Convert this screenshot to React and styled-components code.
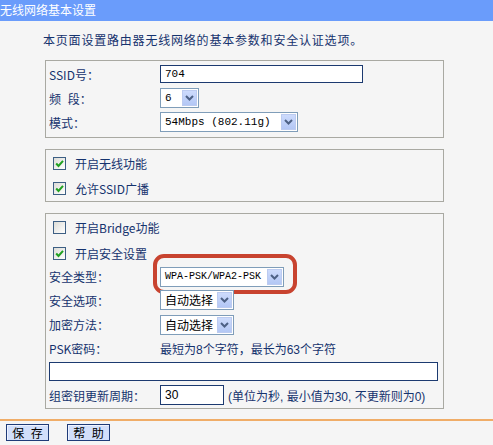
import React from "react";
import styled, { createGlobalStyle } from "styled-components";

const GlobalStyle = createGlobalStyle`
  html, body {
    margin: 0;
    padding: 0;
    background: #f5f5f5;
  }
  body {
    font-family: "Noto Sans CJK SC", "Liberation Sans", sans-serif;
    font-size: 12px;
    color: #15336e;
  }
`;

const Page = styled.div`
  width: 493px;
  height: 445px;
  overflow: hidden;
  background: #f5f5f5;
`;

const TitleBar = styled.div`
  height: 21px;
  background: #6a9cfb;
  color: #fff;
  font-size: 12px;
  line-height: 19px;
  white-space: nowrap;
`;

const Content = styled.div`
  padding-left: 43px;
  width: 401px;
`;

const Intro = styled.div`
  margin-top: 10px;
  height: 18px;
  line-height: 18px;
  letter-spacing: 0.8px;
  white-space: nowrap;
`;

const Box = styled.div`
  margin: 11px 0 0 2px;
  width: 397px;
  border: 1px solid #a9a9a2;
  padding: ${(p) => p.pad || "0"};
`;

const Row = styled.div`
  position: relative;
  display: flex;
  align-items: center;
  height: ${(p) => p.h || 24}px;
  padding-left: 3px;
  white-space: nowrap;
`;

const Label = styled.div`
  width: 111px;
  flex: none;
  word-spacing: 4px;
`;

const TextInput = styled.div`
  box-sizing: border-box;
  width: ${(p) => p.w}px;
  height: ${(p) => p.h || 18}px;
  border: 1px solid #1c3a70;
  background: #fff;
  color: #000;
  font-family: ${(p) => (p.sans ? '"Liberation Sans", sans-serif' : '"Liberation Mono", monospace')};
  font-size: ${(p) => (p.sans ? 12 : 11)}px;
  line-height: ${(p) => (p.h || 18) - 2}px;
  padding-left: 4px;
`;

const Select = styled.div`
  box-sizing: border-box;
  width: ${(p) => p.w}px;
  height: 20px;
  border: 1px solid #7f9db9;
  background: #fff;
  display: flex;
  align-items: center;
  justify-content: space-between;
  padding: 1px 1px 1px 4px;
  color: #000;
`;

const SelectText = styled.span`
  font-family: ${(p) => (p.mono ? '"Liberation Mono", monospace' : '"Noto Sans CJK SC", sans-serif')};
  font-size: ${(p) => p.size || 12}px;
  line-height: 16px;
`;

const Arrow = styled.span`
  box-sizing: border-box;
  width: 15px;
  height: 16px;
  border: 1px solid #bccbf0;
  background: linear-gradient(#cddbfc, #b3c7f5);
  display: flex;
  align-items: center;
  justify-content: center;
`;

const CheckRow = styled.div`
  display: flex;
  align-items: center;
  gap: 9px;
  height: ${(p) => p.h || 25}px;
  padding-left: 7px;
  white-space: nowrap;
`;

const Check = styled.span`
  box-sizing: border-box;
  width: 13px;
  height: 13px;
  border: 1px solid #3d5f84;
  background: linear-gradient(135deg, #dcdcd7, #ffffff);
  display: flex;
  align-items: center;
  justify-content: center;
`;

const Hint = styled.span`
  font-family: "Liberation Sans", "Noto Sans CJK SC", sans-serif;
  font-size: 12px;
  margin-left: ${(p) => p.ml || 0}px;
`;

const Ring = styled.div`
  position: absolute;
  left: 107px;
  top: -11px;
  width: 144px;
  height: 40px;
  box-sizing: border-box;
  border: 4px solid #c8432f;
  border-radius: 11px;
  pointer-events: none;
`;

const Divider = styled.div`
  margin-top: 10px;
  height: 2px;
  background: #f0ad68;
`;

const ButtonBar = styled.div`
  display: flex;
  gap: 18px;
  padding: 3px 0 0 6px;
`;

const Button = styled.div`
  box-sizing: border-box;
  width: 43px;
  height: 17px;
  border: 1px solid #1f3b78;
  background: #d2dffb;
  box-shadow: inset 1px 1px 0 #eef3ff;
  color: #000;
  text-align: center;
  line-height: 15px;
  word-spacing: 4px;
`;

function Chevron() {
  return (
    <svg width="9" height="6" viewBox="0 0 9 6">
      <path d="M1 1 L4.5 4.5 L8 1" fill="none" stroke="#4d6185" strokeWidth="2" />
    </svg>
  );
}

function Dropdown({ w, mono, size, children }) {
  return (
    <Select w={w}>
      <SelectText mono={mono} size={size}>{children}</SelectText>
      <Arrow>
        <Chevron />
      </Arrow>
    </Select>
  );
}

function CheckBox({ checked }) {
  return (
    <Check>
      {checked && (
        <svg width="9" height="9" viewBox="0 0 9 9">
          <polyline points="1.2,4.5 3.5,7 8,1.8" fill="none" stroke="#21a121" strokeWidth="2" />
        </svg>
      )}
    </Check>
  );
}

export default function App() {
  return (
    <Page>
      <GlobalStyle />
      <TitleBar>无线网络基本设置</TitleBar>
      <Content>
        <Intro>本页面设置路由器无线网络的基本参数和安全认证选项。</Intro>

        <Box pad="1px 0 3px">
          <Row>
            <Label>SSID号：</Label>
            <TextInput w={203}>704</TextInput>
          </Row>
          <Row>
            <Label>频 段：</Label>
            <Dropdown w={39} mono size={11}>6</Dropdown>
          </Row>
          <Row>
            <Label>模式：</Label>
            <Dropdown w={138} mono size={11}>54Mbps (802.11g)</Dropdown>
          </Row>
        </Box>

        <Box pad="1px 0 0">
          <CheckRow>
            <CheckBox checked />
            开启无线功能
          </CheckRow>
          <CheckRow>
            <CheckBox checked />
            允许SSID广播
          </CheckRow>
        </Box>

        <Box pad="0 0 1px">
          <CheckRow h={27}>
            <CheckBox />
            开启Bridge功能
          </CheckRow>
          <CheckRow h={24}>
            <CheckBox checked />
            开启安全设置
          </CheckRow>
          <Row h={23}>
            <Label>安全类型：</Label>
            <Dropdown w={124} mono size={10}>WPA-PSK/WPA2-PSK</Dropdown>
            <Ring />
          </Row>
          <Row h={24}>
            <Label>安全选项：</Label>
            <Dropdown w={74}>自动选择</Dropdown>
          </Row>
          <Row h={25}>
            <Label>加密方法：</Label>
            <Dropdown w={74}>自动选择</Dropdown>
          </Row>
          <Row h={23}>
            <Label>PSK密码：</Label>
            <Hint>最短为8个字符，最长为63个字符</Hint>
          </Row>
          <Row h={23}>
            <TextInput w={389} h={19} />
          </Row>
          <Row h={24}>
            <Label>组密钥更新周期：</Label>
            <TextInput w={64} h={20} sans>30</TextInput>
            <Hint ml={4}>(单位为秒, 最小值为30, 不更新则为0)</Hint>
          </Row>
        </Box>
      </Content>
      <Divider />
      <ButtonBar>
        <Button>保 存</Button>
        <Button>帮 助</Button>
      </ButtonBar>
    </Page>
  );
}
